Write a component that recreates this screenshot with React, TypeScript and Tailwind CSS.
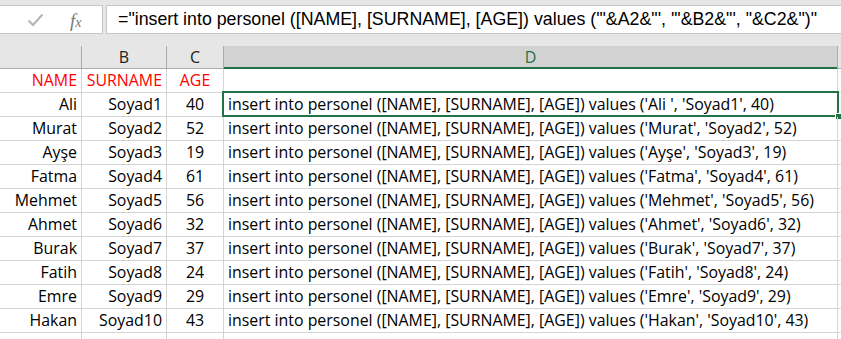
import React from "react";

const rows: [string, string, number][] = [
  ["Ali", "Soyad1", 40],
  ["Murat", "Soyad2", 52],
  ["Ayşe", "Soyad3", 19],
  ["Fatma", "Soyad4", 61],
  ["Mehmet", "Soyad5", 56],
  ["Ahmet", "Soyad6", 32],
  ["Burak", "Soyad7", 37],
  ["Fatih", "Soyad8", 24],
  ["Emre", "Soyad9", 29],
  ["Hakan", "Soyad10", 43],
];

const cellFont = { fontFamily: "'Open Sans', Lato, sans-serif" };

function Row({ a, b, c, d, red, first }: { a: string; b: string; c: string; d: string; red?: boolean; first?: boolean }) {
  const color = red ? "text-[#ff0000]" : "text-black";
  return (
    <div className={`flex h-[24px] border-b border-[#d4d4d4] text-[15.9px] ${color}`} style={cellFont}>
      <div className="w-[82px] shrink-0 border-r border-[#d4d4d4] flex items-center justify-end pr-[4px]">{a}</div>
      <div className="w-[85px] shrink-0 border-r border-[#d4d4d4] flex items-center justify-end pr-[4px]">{b}</div>
      <div className="w-[57px] shrink-0 border-r border-[#d4d4d4] flex items-center justify-center">{c}</div>
      <div className="relative w-[614px] shrink-0 border-r border-[#d4d4d4] flex items-center pl-[4px] whitespace-nowrap">
        {d}
        {first && (
          <>
            <div className="absolute left-[-2px] top-[-2px] right-[-2px] bottom-[-1px] border-2 border-[#217346] pointer-events-none" />
            <div className="absolute right-[-5px] bottom-[-4px] w-[7px] h-[7px] bg-[#217346] border border-white" />
          </>
        )}
      </div>
      <div className="flex-1" />
    </div>
  );
}

export default function App() {
  return (
    <div className="w-[841px] h-[339px] overflow-hidden bg-white select-none">
      {/* Formula bar */}
      <div className="h-[46px] bg-[#e6e6e6] pt-[5px] flex">
        <div className="w-[103px] h-[29px] bg-white border border-[#c6c6c6] border-l-0 flex items-center relative">
          <svg className="absolute left-[27px] top-[7px]" width="17" height="14" viewBox="0 0 17 14">
            <path d="M1.5 7.5 L6 12 L15.5 1.5" fill="none" stroke="#b4b4b4" strokeWidth="2" />
          </svg>
          <span
            className="absolute left-[70px] top-[1px] text-[19px] italic text-[#7a7a7a]"
            style={{ fontFamily: "'Liberation Serif', 'DejaVu Serif', serif" }}
          >
            f<span className="text-[14px]">x</span>
          </span>
        </div>
        <div className="ml-[3px] flex-1 h-[29px] bg-white border border-[#c6c6c6] border-r-0 flex items-center pl-[11px]">
          <span className="text-[17.8px] text-black whitespace-nowrap" style={{ fontFamily: "'Liberation Sans', Arial, sans-serif" }}>
            ="insert into personel ([NAME], [SURNAME], [AGE]) values ('"&A2&"', '"&B2&"', "&C2&")"
          </span>
        </div>
      </div>
      {/* Column headers */}
      <div className="flex h-[23px] bg-[#e6e6e6] border-b border-[#ababab] text-[16px] text-[#222]" style={cellFont}>
        <div className="w-[82px] shrink-0 border-r border-[#ababab]" />
        <div className="w-[85px] shrink-0 border-r border-[#ababab] flex items-center justify-center">B</div>
        <div className="w-[57px] shrink-0 border-r border-[#ababab] flex items-center justify-center">C</div>
        <div className="w-[614px] shrink-0 border-r border-[#ababab] bg-[#d2d2d2] flex items-center justify-center text-[#217346] relative">
          D
          <div className="absolute left-0 right-0 bottom-[-1px] h-[2px] bg-[#217346]" />
        </div>
        <div className="flex-1" />
      </div>
      <Row a="NAME" b="SURNAME" c="AGE" d="" red />
      {rows.map(([n, s, a], i) => (
        <Row
          key={n}
          a={n}
          b={s}
          c={String(a)}
          d={`insert into personel ([NAME], [SURNAME], [AGE]) values ('${i === 0 ? n + " " : n}', '${s}', ${a})`}
          first={i === 0}
        />
      ))}
      <Row a="" b="" c="" d="" />
    </div>
  );
}
